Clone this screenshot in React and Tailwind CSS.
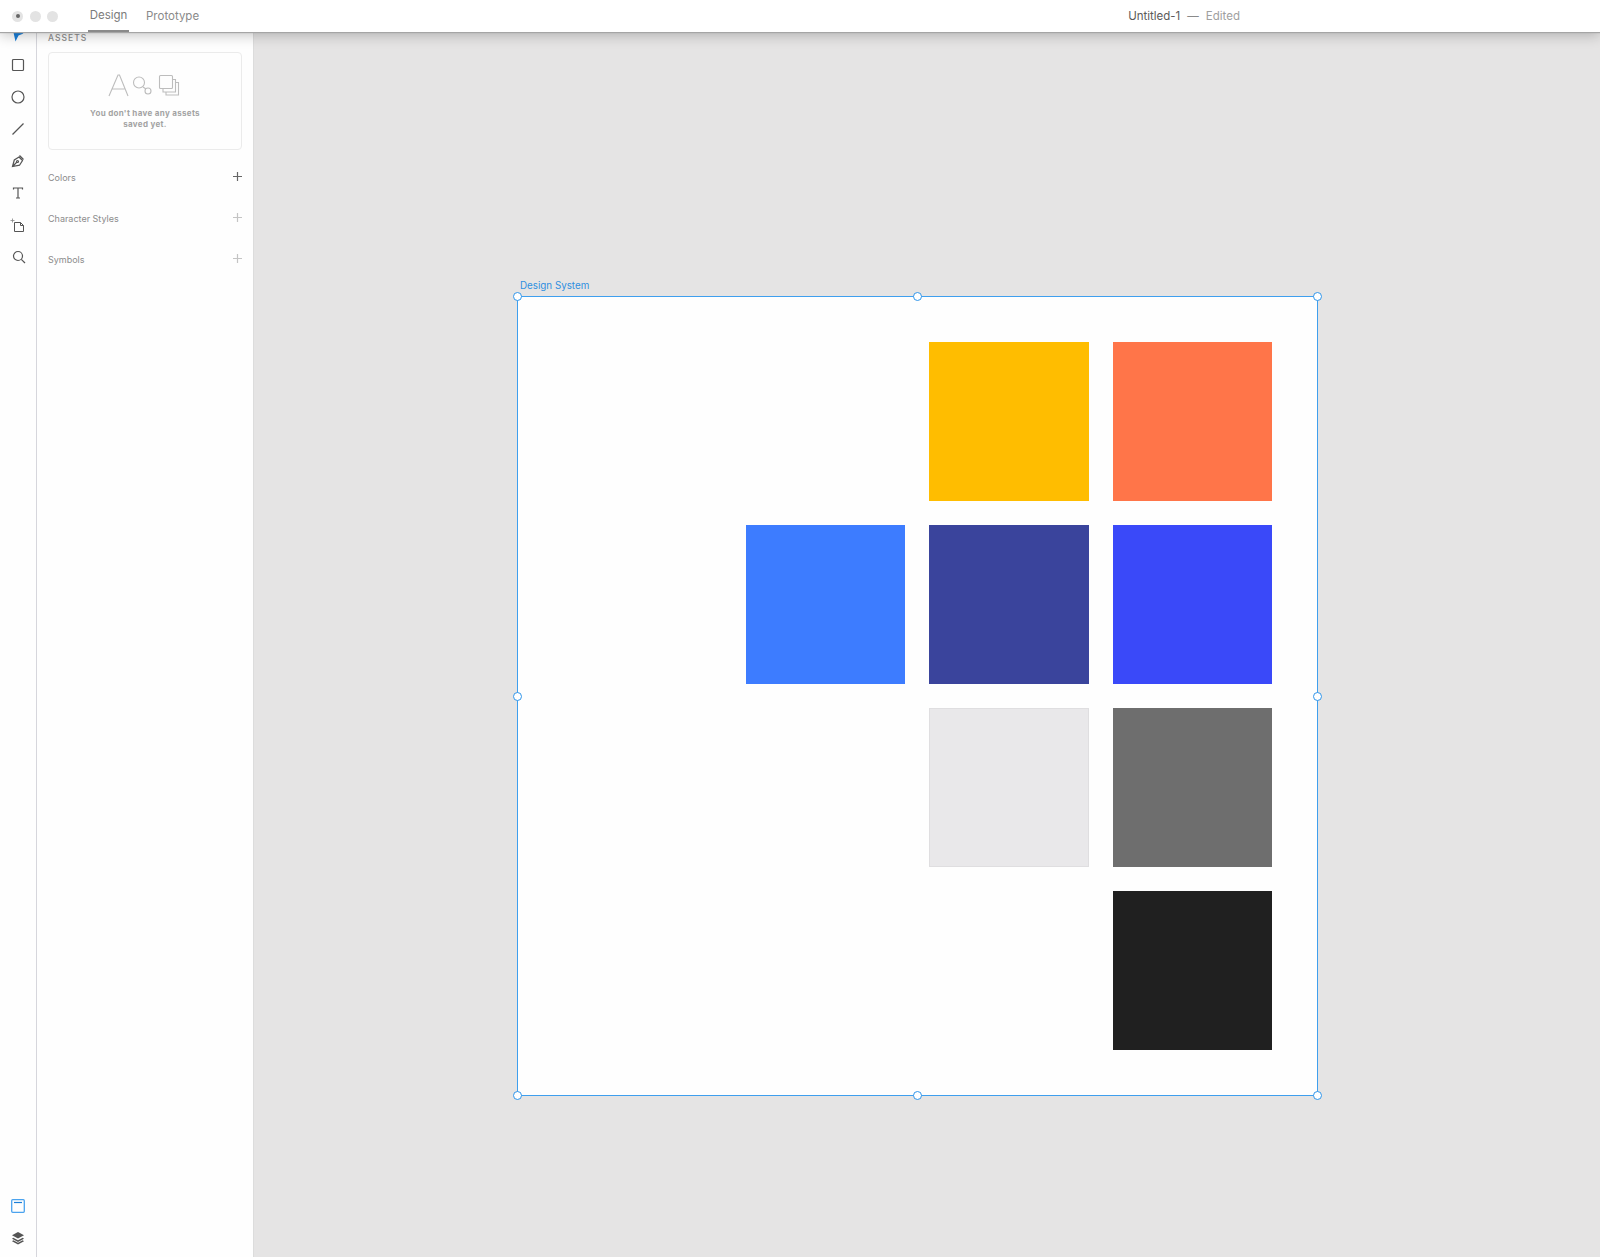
const swatches = [
  [null, "bg-[#ffbd00]", "bg-[#ff7549]"],
  ["bg-[#3d7cff]", "bg-[#3a449c]", "bg-[#3a49f9]"],
  [null, "bg-[#e9e8ea] border border-[#dfdee0]", "bg-[#6e6e6e]"],
  [null, null, "bg-[#202020]"],
];

function Handle({ className }) {
  return <div className={"absolute w-[9px] h-[9px] rounded-full bg-white border border-[#2f95ea] " + className} />;
}

function ToolIcon({ children, className = "" }) {
  return <div className={"h-8 w-9 flex items-center justify-center shrink-0 " + className}>{children}</div>;
}

const ic = { fill: "none", stroke: "#555", strokeWidth: 1.2 };

function Section({ label, dark }) {
  return (
    <div className="h-[41px] flex items-center justify-between">
      <span className="text-[9px] text-[#8c8c8c]">{label}</span>
      <svg width="11" height="11" viewBox="0 0 11 11" className="mb-[3px] -mr-px">
        <path d="M5.500 1v9M1 5.500h9" stroke={dark ? "#666" : "#c4c4c4"} strokeWidth="1.200" fill="none" />
      </svg>
    </div>
  );
}

export default function App() {
  return (
    <div className="w-[1600px] h-[1257px] overflow-hidden flex flex-col bg-[#e5e4e4] font-['Inter','Liberation_Sans',sans-serif]">
      <header className="relative z-10 h-8 shrink-0 bg-white flex items-center shadow-[0_1px_1px_#a5a5a5,0_3px_14px_rgba(0,0,0,0.24)]">
        <div className="flex items-center gap-[6.5px] pl-[12px] w-[88px]">
          <div className="w-[11px] h-[11px] rounded-full bg-[#e3e3e3] flex items-center justify-center">
            <div className="w-[4px] h-[4px] rounded-full bg-[#666]" />
          </div>
          <div className="w-[11px] h-[11px] rounded-full bg-[#e3e3e3]" />
          <div className="w-[11px] h-[11px] rounded-full bg-[#e3e3e3]" />
        </div>
        <div className="h-8 w-[41px] pt-[2px] flex items-center justify-center text-[11.5px] text-[#7b7b7b] border-b-2 border-[#8a8a8a]">Design</div>
        <div className="ml-[17px] pt-[1px] text-[11.5px] text-[#8a8a8a]">Prototype</div>
        <div className="ml-[929px] pt-[1px] flex items-center text-[11.5px]">
          <span className="text-[#5a5a5a]">Untitled-1</span>
          <span className="text-[#8a8a8a] mx-[7px]">—</span>
          <span className="text-[#a0a0a0]">Edited</span>
        </div>
      </header>

      <div className="flex-1 flex min-h-0">
        <aside className="w-[37px] shrink-0 bg-[#fefefe] border-r border-[#d6d6dc] flex flex-col">
          <ToolIcon className="-mt-[15px]">
            <svg width="14" height="14" viewBox="0 0 14 14" className="translate-y-[2px]"><path d="M1.500 0l11 5.500-5 2-3 6z" fill="#1b7fd8" /></svg>
          </ToolIcon>
          <ToolIcon>
            <svg width="14" height="14" viewBox="0 0 14 14"><rect x="1.5" y="1.5" width="11" height="11" rx="1" {...ic} /></svg>
          </ToolIcon>
          <ToolIcon>
            <svg width="14" height="14" viewBox="0 0 14 14"><circle cx="7" cy="7" r="6" {...ic} /></svg>
          </ToolIcon>
          <ToolIcon>
            <svg width="14" height="14" viewBox="0 0 14 14"><path d="M1.5 12.5L12.5 1.5" {...ic} /></svg>
          </ToolIcon>
          <ToolIcon>
            <svg width="14" height="14" viewBox="0 0 14 14"><path d="M1.5 12.5l1.8-6.5 4.7-3 3.5 3.5-3 4.7zM1.5 12.5L6 8M8.5 1.5l4 4" {...ic} /><circle cx="6.5" cy="7.5" r="1" {...ic} /></svg>
          </ToolIcon>
          <ToolIcon>
            <svg width="14" height="14" viewBox="0 0 14 14"><path d="M2.5 3.5v-1.5h9v1.5M7 2v10M5 12h4" {...ic} /></svg>
          </ToolIcon>
          <ToolIcon>
            <svg width="16" height="16" viewBox="0 0 16 16"><path d="M4.5 5.5h6l3 3v6h-9zM10.500 5.500v3h3" fill="none" stroke="#555" strokeWidth="1" /><path d="M0.500 3.500h4M2.500 1.500v4" fill="none" stroke="#888" strokeWidth="0.8" /></svg>
          </ToolIcon>
          <ToolIcon className="pl-px">
            <svg width="14" height="14" viewBox="0 0 14 14"><circle cx="6" cy="6" r="4.5" {...ic} /><path d="M9.3 9.3l3.7 3.7" {...ic} /></svg>
          </ToolIcon>
          <div className="flex-1" />
          <ToolIcon>
            <svg width="14" height="14" viewBox="0 0 14 14"><rect x="0.7" y="0.7" width="12.6" height="12.6" rx="1" fill="none" stroke="#4ba3ee" strokeWidth="1.3" /><path d="M3 3.5h8" stroke="#1b7fd8" strokeWidth="1.2" /></svg>
          </ToolIcon>
          <ToolIcon className="mb-[3px]">
            <svg width="14" height="14" viewBox="0 0 14 14"><path d="M7 1l6 3.2-6 3.2-6-3.2z" fill="#555" /><path d="M2.3 6.8L1 7.7l6 3.3 6-3.3-1.3-.9L7 9.3z" fill="#555" /><path d="M2.3 9.3L1 10.2l6 3.3 6-3.3-1.3-.9L7 11.8z" fill="#555" /></svg>
          </ToolIcon>
        </aside>

        <aside className="w-[217px] shrink-0 bg-[#fefefe] border-r border-[#dcdcdc] px-[11px] flex flex-col">
          <div className="h-3 mb-2 flex items-center text-[8.5px] font-medium tracking-[0.12em] text-[#8c8c8c]">ASSETS</div>
          <div className="h-[98px] w-[194px] rounded border border-[#ebebeb] flex flex-col items-center pt-[21px]">
            <svg width="72" height="24" viewBox="0 0 72 24" className="shrink-0 -translate-x-px">
              <path d="M1 22L10 1h1.5L20 22M4.5 15h12" fill="none" stroke="#bdbdbd" strokeWidth="1.1" />
              <circle cx="31" cy="8.5" r="5.5" fill="none" stroke="#bdbdbd" strokeWidth="1.1" />
              <circle cx="40" cy="17" r="3" fill="none" stroke="#bdbdbd" strokeWidth="1.1" />
              <path d="M35 13l3 2" stroke="#bdbdbd" strokeWidth="1.1" />
              <rect x="51.5" y="1.5" width="13" height="13" rx="1" fill="none" stroke="#bdbdbd" strokeWidth="1.1" />
              <path d="M64.5 5.5h3v12.5h-12.5v-3.500M67.500 8.500h3v12.500h-12.500v-3" fill="none" stroke="#bdbdbd" strokeWidth="1.1" />
            </svg>
            <p className="mt-[10px] text-center text-[8px] leading-[10.5px] font-bold text-[#a3a3a3] tracking-[0.04em]">
              You don't have any assets<br />saved yet.
            </p>
          </div>
          <div className="mt-[7px]">
            <Section label="Colors" dark />
            <Section label="Character Styles" />
            <Section label="Symbols" />
          </div>
        </aside>

        <main className="flex-1 pl-[263px] pt-[248px]">
          <div className="mb-[5px] pl-[3px] pt-px h-[11px] flex items-center text-[9.8px] text-[#2f8fe0]">Design System</div>
          <div className="relative w-[801px] h-[800px] bg-[#fefefe] border border-[#3f9fee] pt-[45px] pl-[228px] flex flex-col gap-[24px]">
            <Handle className="-left-[5px] -top-[5px]" />
            <Handle className="left-[395px] -top-[5px]" />
            <Handle className="-right-[5px] -top-[5px]" />
            <Handle className="-left-[5px] top-[395px]" />
            <Handle className="-right-[5px] top-[395px]" />
            <Handle className="-left-[5px] -bottom-[5px]" />
            <Handle className="left-[395px] -bottom-[5px]" />
            <Handle className="-right-[5px] -bottom-[5px]" />
            {swatches.map((row, i) => (
              <div key={i} className="flex gap-[24px]">
                {row.map((c, j) => (
                  <div key={j} className={"h-[159px] " + (j === 0 ? "w-[159px] " : "w-[159.500px] ") + (c || "")} />
                ))}
              </div>
            ))}
          </div>
        </main>
      </div>
    </div>
  );
}
